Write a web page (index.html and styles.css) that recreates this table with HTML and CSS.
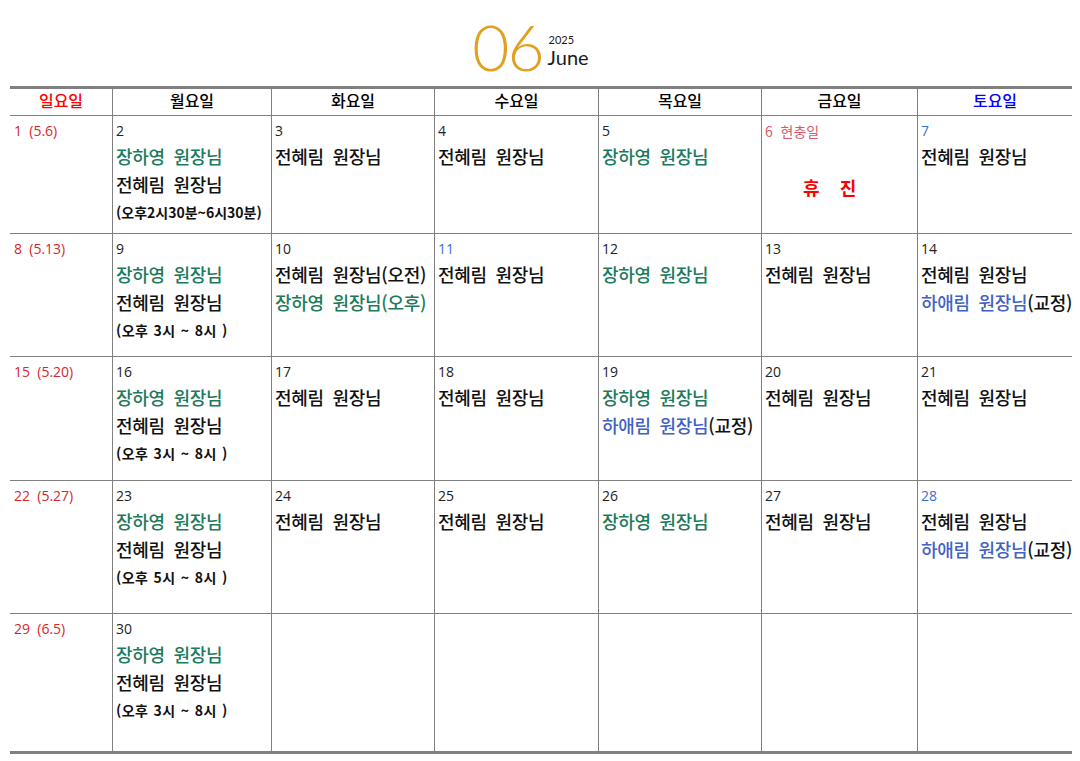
FILE: index.html
```html
<!DOCTYPE html>
<html lang="ko">
<head>
<meta charset="utf-8">
<title>06 June 2025</title>
<link rel="stylesheet" href="styles.css">
</head>
<body>
<header class="title">
  <div class="month-num">06</div>
  <div class="month-side">
    <div class="year">2025</div>
    <div class="month-name">June</div>
  </div>
</header>
<div class="cal">
  <div class="hd sun">일요일</div>
  <div class="hd">월요일</div>
  <div class="hd">화요일</div>
  <div class="hd">수요일</div>
  <div class="hd">목요일</div>
  <div class="hd">금요일</div>
  <div class="hd sat">토요일</div>

  <div class="cell r1"><div class="d sun">1 &nbsp;(5.6)</div></div>
  <div class="cell r1"><div class="d">2</div><div class="n g">장하영 원장님</div><div class="n">전혜림 원장님</div><div class="s tight">(오후2시30분~6시30분)</div></div>
  <div class="cell r1"><div class="d">3</div><div class="n">전혜림 원장님</div></div>
  <div class="cell r1"><div class="d">4</div><div class="n">전혜림 원장님</div></div>
  <div class="cell r1"><div class="d">5</div><div class="n g">장하영 원장님</div></div>
  <div class="cell r1"><div class="d hol">6 &nbsp;현충일</div><div class="closed">휴&nbsp;&nbsp;&nbsp;&nbsp;진</div></div>
  <div class="cell r1"><div class="d blue">7</div><div class="n">전혜림 원장님</div></div>

  <div class="cell r2"><div class="d sun">8 &nbsp;(5.13)</div></div>
  <div class="cell r2"><div class="d">9</div><div class="n g">장하영 원장님</div><div class="n">전혜림 원장님</div><div class="s">(오후 3시 ~ 8시 )</div></div>
  <div class="cell r2"><div class="d">10</div><div class="n">전혜림 원장님(오전)</div><div class="n g">장하영 원장님(오후)</div></div>
  <div class="cell r2"><div class="d blue">11</div><div class="n">전혜림 원장님</div></div>
  <div class="cell r2"><div class="d">12</div><div class="n g">장하영 원장님</div></div>
  <div class="cell r2"><div class="d">13</div><div class="n">전혜림 원장님</div></div>
  <div class="cell r2"><div class="d">14</div><div class="n">전혜림 원장님</div><div class="n"><span class="b">하애림 원장님</span>(교정)</div></div>

  <div class="cell r3"><div class="d sun">15 &nbsp;(5.20)</div></div>
  <div class="cell r3"><div class="d">16</div><div class="n g">장하영 원장님</div><div class="n">전혜림 원장님</div><div class="s">(오후 3시 ~ 8시 )</div></div>
  <div class="cell r3"><div class="d">17</div><div class="n">전혜림 원장님</div></div>
  <div class="cell r3"><div class="d">18</div><div class="n">전혜림 원장님</div></div>
  <div class="cell r3"><div class="d">19</div><div class="n g">장하영 원장님</div><div class="n"><span class="b">하애림 원장님</span>(교정)</div></div>
  <div class="cell r3"><div class="d">20</div><div class="n">전혜림 원장님</div></div>
  <div class="cell r3"><div class="d">21</div><div class="n">전혜림 원장님</div></div>

  <div class="cell r4"><div class="d sun">22 &nbsp;(5.27)</div></div>
  <div class="cell r4"><div class="d">23</div><div class="n g">장하영 원장님</div><div class="n">전혜림 원장님</div><div class="s">(오후 5시 ~ 8시 )</div></div>
  <div class="cell r4"><div class="d">24</div><div class="n">전혜림 원장님</div></div>
  <div class="cell r4"><div class="d">25</div><div class="n">전혜림 원장님</div></div>
  <div class="cell r4"><div class="d">26</div><div class="n g">장하영 원장님</div></div>
  <div class="cell r4"><div class="d">27</div><div class="n">전혜림 원장님</div></div>
  <div class="cell r4"><div class="d blue">28</div><div class="n">전혜림 원장님</div><div class="n"><span class="b">하애림 원장님</span>(교정)</div></div>

  <div class="cell r5"><div class="d sun">29 &nbsp;(6.5)</div></div>
  <div class="cell r5"><div class="d">30</div><div class="n g">장하영 원장님</div><div class="n">전혜림 원장님</div><div class="s">(오후 3시 ~ 8시 )</div></div>
  <div class="cell r5"></div>
  <div class="cell r5"></div>
  <div class="cell r5"></div>
  <div class="cell r5"></div>
  <div class="cell r5"></div>
</div>
</body>
</html>
```
FILE: styles.css
```css
html, body {
  margin: 0;
  padding: 0;
  background: #ffffff;
}
body {
  font-family: "Noto Sans CJK KR", "Noto Sans", sans-serif;
  color: #000;
}
.title {
  display: flex;
  justify-content: center;
  align-items: flex-start;
  height: 86px;
  margin-right: 19px;
}
.month-num {
  font-family: "Lato", "Open Sans", sans-serif;
  font-weight: 300;
  font-size: 64px;
  line-height: 64px;
  margin-top: 15px;
  color: #e0a020;
  letter-spacing: -2px;
}
.month-side {
  margin-left: 6px;
  margin-top: 34px;
  display: flex;
  flex-direction: column;
}
.year {
  font-family: "Lato", "Open Sans", sans-serif;
  font-size: 11px;
  line-height: 11px;
  height: 11px;
  color: #1a1a1a;
}
.month-name {
  font-family: "Lato", "Open Sans", sans-serif;
  font-size: 20px;
  line-height: 24px;
  color: #1a1a1a;
  margin-top: 0;
  margin-left: -1px;
}
.cal {
  margin-left: 10px;
  width: 1062px;
  display: grid;
  grid-template-columns: 102px 159px 163px 164px 163px 156px 155px;
  grid-template-rows: 27px 118px 123px 124px 133px 137px;
  border-top: 3px solid #808080;
  border-bottom: 3px solid #808080;
}
.hd {
  border-bottom: 1px solid #808080;
  border-left: 1px solid #808080;
  text-align: center;
  font-size: 16px;
  font-weight: 500;
  line-height: 22px;
  padding-bottom: 4px;
}
.hd:first-child { border-left: none; }
.hd.sun { color: #ff0000; }
.hd.sat { color: #0000ff; }
.cell {
  border-left: 1px solid #808080;
  border-bottom: 1px solid #808080;
  padding: 4px 0 0 3px;
  overflow: hidden;
  white-space: nowrap;
}
.cell:nth-child(7n+1) { border-left: none; padding-left: 4px; }
.cell.r5 { border-bottom: none; }
.d {
  font-family: "Open Sans", "Noto Sans CJK KR", sans-serif;
  font-size: 14px;
  line-height: 22px;
  color: #222;
}
.d.sun { color: #d8262e; }
.d.blue { color: #3a6fd0; }
.d.hol { color: #d85a6a; font-family: "Noto Sans CJK KR", sans-serif; }
.n {
  font-size: 18px;
  line-height: 28px;
  font-weight: 500;
  word-spacing: 4px;
  color: #111;
  letter-spacing: -0.3px;
}
.n.g { color: #1d7a5c; }
.n .b { color: #3f62c4; }
.s {
  font-size: 14px;
  font-weight: 700;
  line-height: 28px;
  color: #111;
  letter-spacing: 0.4px;
  word-spacing: 1px;
}
.s.tight { letter-spacing: 0; }
.closed {
  margin-top: 31px;
  padding-left: 38px;
  font-size: 18px;
  font-weight: 700;
  line-height: 28px;
  color: #ff0000;
}
```
